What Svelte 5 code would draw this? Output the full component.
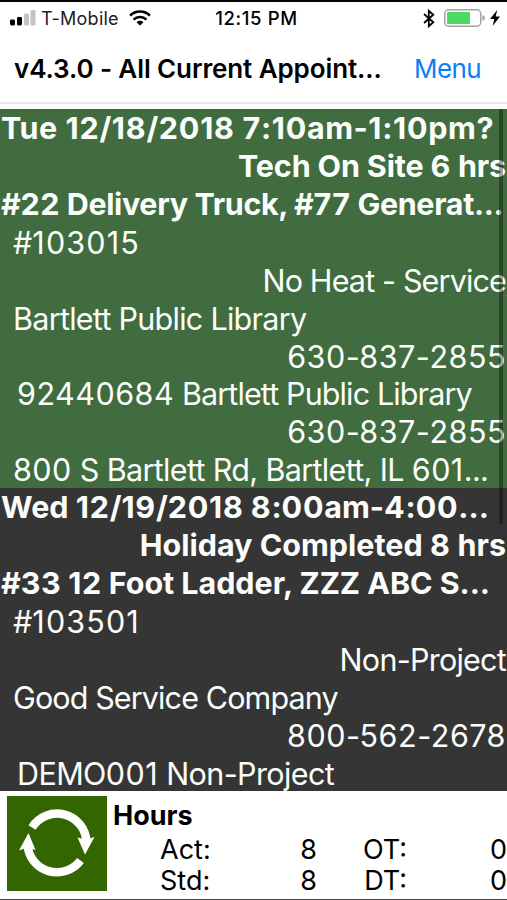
<script lang="ts">
  type Line = {
    text: string;
    kind?: 'title' | 'indent' | 'site';
    right?: boolean;
    tracking?: number;
    digitTracking?: number;
  };

  type Appointment = {
    status: 'on-site' | 'completed';
    lines: Line[];
  };

  const appointments: Appointment[] = [
    {
      status: 'on-site',
      lines: [
        { text: 'Tue 12/18/2018 7:10am-1:10pm?', kind: 'title', tracking: 0.5, digitTracking: 0.8 },
        { text: 'Tech On Site 6 hrs', kind: 'title', right: true, tracking: -0.15 },
        { text: '#22 Delivery Truck, #77 Generat...', kind: 'title', tracking: -0.37 },
        { text: '#103015', kind: 'indent', digitTracking: 1.15 },
        { text: 'No Heat - Service', right: true, tracking: -0.85 },
        { text: 'Bartlett Public Library', kind: 'indent', tracking: -0.72 },
        { text: '630-837-2855', right: true, tracking: -0.4 },
        { text: '92440684 Bartlett Public Library', kind: 'site', tracking: -0.87 },
        { text: '630-837-2855', right: true, tracking: -0.4 },
        { text: '800 S Bartlett Rd, Bartlett, IL 601...', kind: 'indent', tracking: -0.65 },
      ],
    },
    {
      status: 'completed',
      lines: [
        { text: 'Wed 12/19/2018 8:00am-4:00...', kind: 'title', digitTracking: 0.75 },
        { text: 'Holiday Completed 8 hrs', kind: 'title', right: true },
        { text: '#33 12 Foot Ladder, ZZZ ABC S...', kind: 'title', tracking: -0.06 },
        { text: '#103501', kind: 'indent', digitTracking: 1.15 },
        { text: 'Non-Project', right: true, tracking: -0.75 },
        { text: 'Good Service Company', kind: 'indent', tracking: -0.88 },
        { text: '800-562-2678', right: true, tracking: -0.4 },
        { text: 'DEMO001 Non-Project', kind: 'site', tracking: -0.6 },
      ],
    },
  ];

  const hours = [
    { label: 'Act:', value: 8, overLabel: 'OT:', overValue: 0 },
    { label: 'Std:', value: 8, overLabel: 'DT:', overValue: 0 },
  ];

  // Numbers are set a little wider than the words around them
  function splitRuns(line: Line): { text: string; spacing: number }[] {
    return line.text
      .split(/(\d+)/)
      .filter((run) => run !== '')
      .map((run) => ({
        text: run,
        spacing: /^\d/.test(run) ? (line.digitTracking ?? 0.5) : (line.tracking ?? 0),
      }));
  }
</script>

<div class="screen">
  <div class="status-bar">
    <div class="carrier">
      <svg class="signal" width="26" height="16" viewBox="0 0 26 16">
        <rect x="0" y="9.5" width="5" height="6" rx="1.4" fill="#000" />
        <rect x="7" y="7" width="5" height="8.5" rx="1.4" fill="#000" />
        <rect x="14" y="3.5" width="5" height="12" rx="1.2" fill="#c4c4c4" />
        <rect x="20.5" y="0" width="5" height="15.5" rx="1.2" fill="#c4c4c4" />
      </svg>
      <span class="carrier-name">T-Mobile</span>
      <svg class="wifi" width="22" height="16" viewBox="0 0 22 16">
        <path d="M1.1 5.6 A14 14 0 0 1 20.9 5.6" fill="none" stroke="#000" stroke-width="2.7" />
        <path d="M4.6 9.6 A9 9 0 0 1 17.4 9.6" fill="none" stroke="#000" stroke-width="2.6" />
        <path d="M11 15.6 L7.5 12.3 A5 5 0 0 1 14.5 12.3 Z" fill="#000" />
      </svg>
    </div>
    <span class="clock">12:15 PM</span>
    <div class="power">
      <svg width="12" height="19" viewBox="0 0 12 19">
        <path
          d="M1 5 L10.3 13.3 L5.8 17.2 V1.8 L10.3 5.7 L1 14"
          fill="none"
          stroke="#000"
          stroke-width="1.8"
        />
      </svg>
      <svg class="battery" width="42" height="18" viewBox="0 0 42 18">
        <rect x="0.75" y="0.75" width="36" height="16.5" rx="4" fill="#fff" stroke="#a2a2a2" stroke-width="1.5" />
        <rect x="3" y="3" width="23" height="12" rx="1" fill="#4cd964" />
        <path d="M38.5 6 Q41 7 41 9 Q41 11 38.5 12 Z" fill="#a2a2a2" />
      </svg>
      <svg class="bolt" width="10" height="16" viewBox="0 0 10 16">
        <path d="M7.2 0 L0 9 H4.3 L2.6 16 L10 6.6 H5.7 Z" fill="#000" />
      </svg>
    </div>
  </div>

  <header class="nav">
    <h1>v4.3.0 - All Current Appoint...</h1>
    <button class="menu">Menu</button>
  </header>

  <main class="list">
    {#each appointments as appointment}
      <section class="appointment {appointment.status}">
        {#each appointment.lines as line}
          <div class="line {line.kind ?? ''}" class:right={line.right}>
            {#each splitRuns(line) as run}<span style="letter-spacing: {run.spacing}px">{run.text}</span>{/each}
          </div>
        {/each}
      </section>
    {/each}
    <div class="scrollbar"></div>
  </main>

  <footer class="summary">
    <button class="refresh" aria-label="Refresh">
      <svg width="100" height="95" viewBox="0 0 100 95">
        <g fill="none" stroke="#fff" stroke-width="8.5">
          <path d="M25 31.5 A29.5 29.5 0 0 1 79.5 46" />
          <path d="M73.5 64.5 A29.5 29.5 0 0 1 20.5 49" />
        </g>
        <g fill="#fff">
          <path d="M70.5 41.5 L79 43.5 L87.5 41 L78 58.5 Z" />
          <path d="M21.5 37 L28.5 54 L20 51.5 L12 54.5 Z" />
        </g>
      </svg>
    </button>
    <div class="hours">
      <h2>Hours</h2>
      {#each hours as row}
        <div class="hours-row">
          <span>{row.label}</span>
          <span class="value">{row.value}</span>
          <span class="over">{row.overLabel}</span>
          <span class="value">{row.overValue}</span>
        </div>
      {/each}
    </div>
  </footer>
</div>

<style>
  :global(body) {
    margin: 0;
    background: #fff;
  }

  .screen {
    box-sizing: border-box;
    display: flex;
    flex-direction: column;
    width: 507px;
    height: 900px;
    overflow: hidden;
    border-top: 2px solid #050505;
    border-bottom: 1px solid #444;
    background: #fff;
    color: #000;
    font-family: Inter, 'Liberation Sans', sans-serif;
  }

  .status-bar {
    display: grid;
    grid-template-columns: 1fr auto 1fr;
    align-items: center;
    box-sizing: border-box;
    height: 32px;
    padding: 0 7px 0 10px;
    font-size: 18px;
  }

  .carrier,
  .power {
    display: flex;
    align-items: center;
  }

  .carrier-name {
    margin: 0 10px 0 5px;
    color: #222;
    letter-spacing: 0.25px;
  }

  .clock {
    padding-left: 3px;
    font-size: 18.5px;
    font-weight: 500;
    letter-spacing: 0.6px;
  }

  .power {
    justify-content: flex-end;
  }

  .battery {
    margin: 0 4px 0 9px;
  }

  .nav {
    display: flex;
    align-items: center;
    justify-content: space-between;
    box-sizing: border-box;
    height: 70px;
    padding: 0 26px 0 14px;
    border-bottom: 2px solid #e8e8e8;
  }

  h1,
  h2 {
    margin: 0;
    white-space: nowrap;
  }

  h1 {
    font-size: 26px;
    font-weight: 600;
    letter-spacing: -0.1px;
  }

  button {
    padding: 0;
    border: none;
    background: none;
    font: inherit;
  }

  .menu {
    color: #0f7df5;
    font-size: 26px;
    letter-spacing: -0.6px;
  }

  .list {
    position: relative;
    flex: 1;
    min-height: 0;
    margin-top: 5px;
    overflow: hidden;
    background: #353535;
    color: #fbfdfb;
  }

  .on-site {
    background: #406c40;
  }

  .completed {
    background: #353535;
  }

  .line {
    height: 37.93px;
    line-height: 39px;
    font-size: 30.5px;
    white-space: nowrap;
  }

  .title {
    padding-left: 1px;
    font-weight: 700;
    line-height: 38px;
  }

  .indent {
    padding-left: 13px;
  }

  .site {
    padding-left: 17px;
  }

  .right {
    padding-right: 1px;
    text-align: right;
  }

  .scrollbar {
    position: absolute;
    top: 0;
    right: 4px;
    width: 4px;
    height: 415px;
    background: rgba(0, 0, 0, 0.35);
  }

  .summary {
    display: flex;
    box-sizing: border-box;
    height: 108px;
    padding: 5px 0 0 7px;
  }

  .refresh {
    width: 100px;
    height: 95px;
    background: #336600;
  }

  .hours {
    flex: 1;
    padding-left: 5px;
    font-size: 27px;
  }

  h2 {
    height: 38px;
    padding-left: 1px;
    font-size: 27px;
    font-weight: 700;
    line-height: 40px;
  }

  .hours-row {
    display: grid;
    grid-template-columns: 60px 97px 90px 1fr;
    height: 31px;
    padding-left: 48px;
    line-height: 31px;
  }

  .value {
    text-align: right;
  }

  .over {
    text-align: right;
  }
</style>
